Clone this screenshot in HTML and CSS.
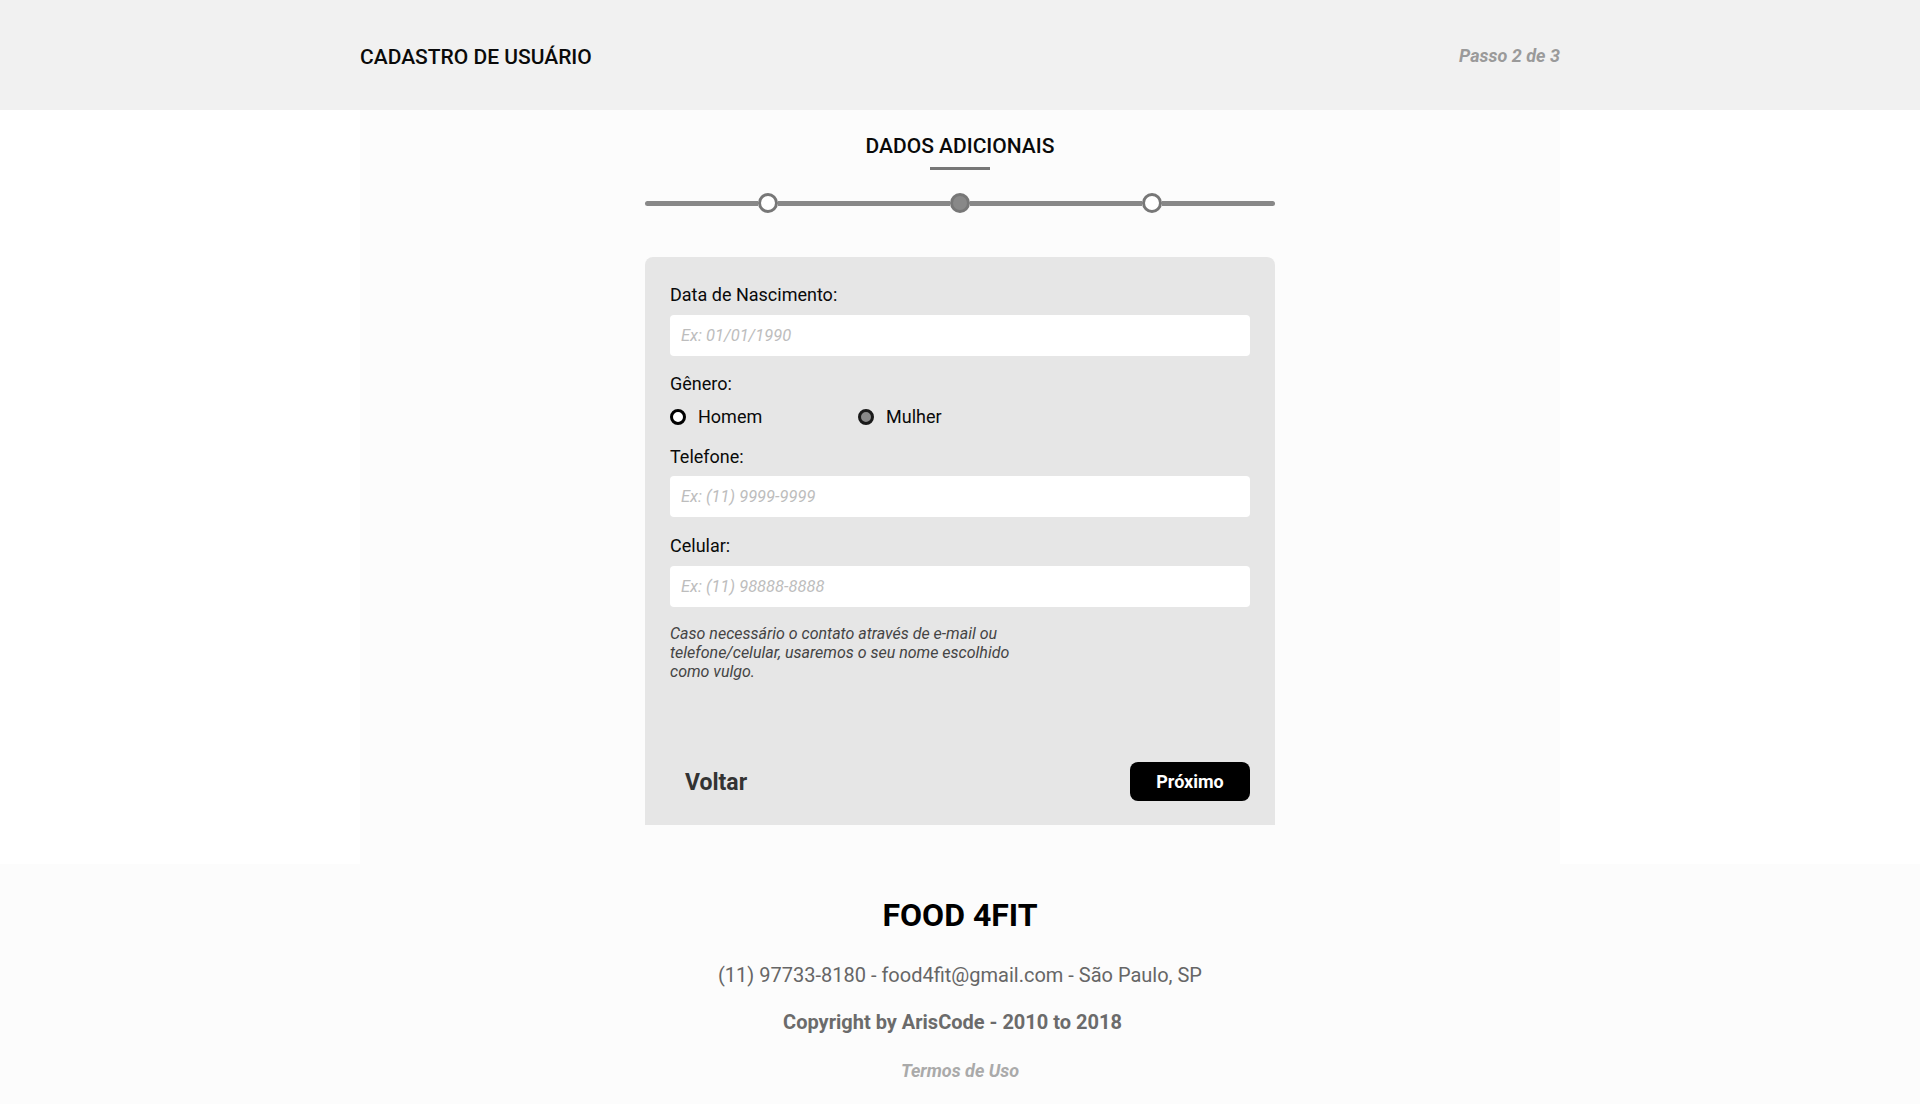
FILE: index.html
```html
<!DOCTYPE html>
<html lang="pt-BR">
<head>
<meta charset="utf-8">
<title>Cadastro de Usuário - Food 4Fit</title>
<link rel="stylesheet" href="styles.css">
</head>
<body>
<header class="topbar">
  <div class="topbar-inner">
    <h1 class="page-title">CADASTRO DE USUÁRIO</h1>
    <span class="step-info">Passo 2 de 3</span>
  </div>
</header>

<main class="main">
  <h2 class="section-title">DADOS ADICIONAIS</h2>
  <div class="title-bar"></div>

  <div class="progress">
    <span class="seg seg-first"></span>
    <span class="dot"></span>
    <span class="seg seg-mid"></span>
    <span class="dot dot-active"></span>
    <span class="seg seg-mid"></span>
    <span class="dot"></span>
    <span class="seg seg-last"></span>
  </div>

  <form class="card">
    <label class="field-label lbl-birth">Data de Nascimento:</label>
    <input class="field-input" type="text" placeholder="Ex: 01/01/1990">

    <label class="field-label lbl-gender">Gênero:</label>
    <div class="radio-row">
      <span class="radio-opt"><span class="radio"></span>Homem</span>
      <span class="radio-opt"><span class="radio radio-checked"></span>Mulher</span>
    </div>

    <label class="field-label lbl-phone">Telefone:</label>
    <input class="field-input" type="text" placeholder="Ex: (11) 9999-9999">

    <label class="field-label lbl-cell">Celular:</label>
    <input class="field-input" type="text" placeholder="Ex: (11) 98888-8888">

    <p class="note">Caso necessário o contato através de e-mail ou telefone/celular, usaremos o seu nome escolhido como vulgo.</p>

    <div class="actions">
      <button type="button" class="btn-back">Voltar</button>
      <button type="button" class="btn-next">Próximo</button>
    </div>
  </form>
</main>

<footer class="footer">
  <div class="brand">FOOD 4FIT</div>
  <div class="contact">(11) 97733-8180 - food4fit@gmail.com - São Paulo, SP</div>
  <div class="copyright">Copyright by ArisCode - 2010 to 2018</div>
  <div class="terms">Termos de Uso</div>
</footer>
</body>
</html>
```

FILE: styles.css
```css
* { box-sizing: border-box; }

html, body {
  margin: 0;
  padding: 0;
}

body {
  background: #ffffff;
  font-family: Roboto, "Liberation Sans", Arial, sans-serif;
  color: #111;
}

/* Header */
.topbar {
  background: #f1f1f1;
  height: 110px;
}
.topbar-inner {
  width: 1200px;
  height: 110px;
  margin: 0 auto;
  display: flex;
  align-items: center;
  justify-content: space-between;
}
.page-title {
  margin: 0;
  padding-top: 4px;
  font-size: 21px;
  font-weight: 500;
  color: #0a0a0a;
  line-height: 24px;
}
.step-info {
  padding-top: 1px;
  font-size: 18px;
  font-weight: 700;
  font-style: italic;
  color: #9a9a9a;
}

/* Main */
.main {
  width: 1200px;
  height: 754px;
  margin: 0 auto;
  background: #fcfcfc;
  padding-top: 24px;
  display: flex;
  flex-direction: column;
  align-items: center;
}
.section-title {
  margin: 0;
  font-size: 21px;
  font-weight: 500;
  line-height: 24px;
  color: #0a0a0a;
}
.title-bar {
  width: 60px;
  height: 3px;
  background: #777;
  margin-top: 9px;
}

.progress {
  margin-top: 23px;
  width: 630px;
  height: 20px;
  display: flex;
  align-items: center;
}
.seg {
  height: 5px;
  background: #888;
}
.seg-first { width: 113px; border-radius: 3px 0 0 3px; }
.seg-mid { width: 172px; }
.seg-last { width: 113px; border-radius: 0 3px 3px 0; }
.dot {
  width: 20px;
  height: 20px;
  border-radius: 50%;
  border: 3px solid #777;
  background: #fff;
}
.dot-active {
  background: #888;
}

/* Card */
.card {
  margin-top: 44px;
  width: 630px;
  height: 568px;
  background: #e6e6e6;
  border-radius: 8px 8px 0 0;
  padding: 28px 25px 24px 25px;
  display: flex;
  flex-direction: column;
}
.field-label {
  display: block;
  font-size: 18px;
  line-height: 20px;
  color: #0a0a0a;
}
.lbl-birth { margin-bottom: 10px; }
.lbl-gender { margin-top: 18px; }
.lbl-phone { margin-top: 20px; margin-bottom: 9px; }
.lbl-cell { margin-top: 19px; margin-bottom: 10px; }

.field-input {
  width: 580px;
  height: 41px;
  flex: 0 0 41px;
  border: none;
  border-radius: 4px;
  background: #fff;
  padding: 0 11px;
  font-family: Roboto, "Liberation Sans", Arial, sans-serif;
  font-size: 16.5px;
  font-style: italic;
  color: #333;
  outline: none;
}
.field-input::placeholder {
  color: #bdbdbd;
  font-style: italic;
}

.radio-row {
  display: flex;
  margin-top: 13px;
  height: 20px;
  align-items: center;
}
.radio-opt {
  width: 188px;
  display: flex;
  align-items: center;
  font-size: 18px;
  line-height: 20px;
  color: #0a0a0a;
}
.radio {
  width: 16px;
  height: 16px;
  border-radius: 50%;
  border: 3px solid #000;
  background: #fff;
  margin-right: 12px;
  margin-top: -1px;
}
.radio-checked {
  background: #888;
  border-color: #1a1a1a;
}

.note {
  margin: 17px 0 0 0;
  width: 375px;
  font-size: 16px;
  line-height: 19px;
  font-style: italic;
  color: #444;
}

.actions {
  margin-top: auto;
  display: flex;
  align-items: center;
  justify-content: space-between;
}
.btn-back {
  background: transparent;
  border: none;
  padding: 0 0 0 15px;
  font-family: Roboto, "Liberation Sans", Arial, sans-serif;
  font-size: 23px;
  font-weight: 700;
  color: #333;
  cursor: pointer;
  margin-top: 2px;
}
.btn-next {
  width: 120px;
  height: 39px;
  background: #000;
  color: #fff;
  border: none;
  border-radius: 8px;
  font-family: Roboto, "Liberation Sans", Arial, sans-serif;
  font-size: 18px;
  font-weight: 700;
  cursor: pointer;
}

/* Footer */
.footer {
  background: #fcfcfc;
  height: 240px;
  padding-top: 33px;
  text-align: center;
}
.brand {
  font-size: 32px;
  font-weight: 700;
  line-height: 36px;
  color: #000;
}
.contact {
  margin-top: 30px;
  font-size: 20px;
  line-height: 24px;
  color: #666;
}
.copyright {
  margin-top: 23px;
  padding-right: 15px;
  font-size: 20px;
  line-height: 24px;
  font-weight: 700;
  color: #6b6b6b;
}
.terms {
  margin-top: 26px;
  font-size: 18px;
  line-height: 22px;
  font-weight: 700;
  font-style: italic;
  color: #aaa;
}
```
